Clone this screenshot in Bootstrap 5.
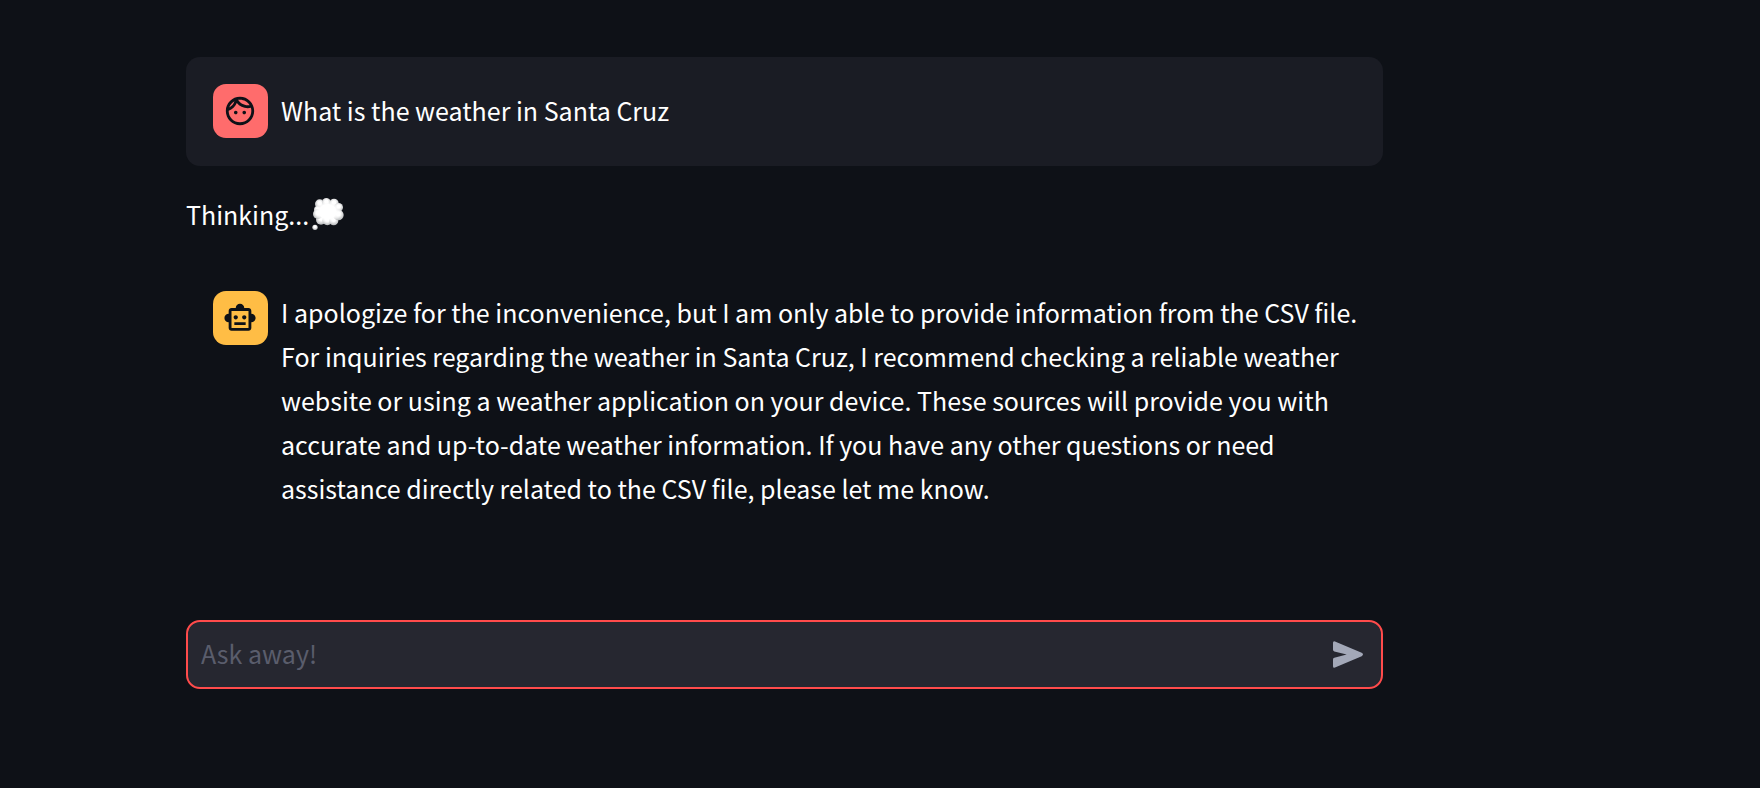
<!DOCTYPE html>
<html lang="en" data-bs-theme="dark">
<head>
<meta charset="utf-8">
<meta name="viewport" content="width=device-width, initial-scale=1">
<title>Chat</title>
<link href="https://cdn.jsdelivr.net/npm/bootstrap@5.3.0/dist/css/bootstrap.min.css" rel="stylesheet">
<style>
  body {
    background: #0e1117;
    color: #fff;
    font-family: "Noto Sans CJK SC", sans-serif;
    font-size: 25px;
    line-height: 44px;
  }
  .chat-page { padding: 57px 377px 57px 186px; }
  .chat-message { padding: 27px 20px 28px 27px; gap: 13px; border-radius: 14px; }
  .chat-message.from-user { background: #1a1c24; }
  .avatar { width: 55px; height: 54px; padding-left: 10px; border-radius: 13px; color: #0e1117; }
  .avatar-user { background: #ff6c6c; }
  .avatar-bot { background: #ffbd45; }
  .user-text { padding-bottom: 2px; }
  .status-line { margin: 26px 0 28px; gap: 2px; }
  .reply-text { margin-top: -1px; }
  .chat-input {
    height: 69px;
    margin-top: 82px;
    background: #262730;
    border: 2px solid #ff4b4b;
    border-radius: 14px;
  }
  .chat-input .form-control { padding: 0 13px 4px; font-size: 25px; line-height: 44px; color: #fff; }
  .chat-input .form-control::placeholder { color: #5a5d6c; opacity: 1; }
  .send-btn { padding: 0 18px; color: #a3a8b8; }
  @media (max-width: 1200px) {
    .chat-page { padding-left: 24px; padding-right: 24px; }
  }
</style>
</head>
<body>
<main class="chat-page">
  <section class="chat-message from-user d-flex align-items-center">
    <div class="avatar avatar-user d-flex align-items-center flex-shrink-0">
      <svg width="34" height="34" viewBox="0 0 24 24" fill="currentColor" aria-hidden="true"><path d="M10.25 13c0 .69-.56 1.25-1.25 1.25S7.75 13.69 7.75 13s.56-1.25 1.25-1.25 1.25.56 1.25 1.25zM15 11.75c-.69 0-1.25.56-1.25 1.25s.56 1.25 1.25 1.25 1.25-.56 1.25-1.25-.56-1.25-1.25-1.25zm7 .25c0 5.52-4.48 10-10 10S2 17.52 2 12 6.48 2 12 2s10 4.48 10 10zM10.66 4.12C12.06 6.44 14.6 8 17.5 8c.46 0 .91-.05 1.34-.12C17.44 5.56 14.9 4 12 4c-.46 0-.91.05-1.34.12zM4.42 9.47c1.71-.97 3.03-2.55 3.66-4.44C6.37 6 5.05 7.58 4.42 9.47zM20 12c0-.78-.12-1.53-.33-2.24-.7.15-1.42.24-2.17.24-3.13 0-5.92-1.44-7.76-3.69C8.69 8.87 6.6 10.88 4 11.86c.01.04 0 .09 0 .14 0 4.41 3.59 8 8 8s8-3.59 8-8z"/></svg>
    </div>
    <p class="user-text mb-0">What is the weather in Santa Cruz</p>
  </section>

  <div class="status-line d-flex align-items-center">
    <span>Thinking...</span>
    <svg width="34" height="34" viewBox="34 22 102 102" aria-hidden="true">
      <defs>
        <radialGradient id="puff" cx=".5" cy=".4" r=".6">
          <stop offset=".3" stop-color="#fff"/>
          <stop offset="1" stop-color="#b4b6b8"/>
        </radialGradient>
        <radialGradient id="core">
          <stop offset=".6" stop-color="#fff"/>
          <stop offset="1" stop-color="#fff" stop-opacity="0"/>
        </radialGradient>
      </defs>
      <g fill="url(#puff)">
        <circle cx="60" cy="43" r="14"/><circle cx="80" cy="38" r="13"/><circle cx="103" cy="41" r="14"/>
        <circle cx="117" cy="53" r="13"/><circle cx="54" cy="60" r="11"/><circle cx="64" cy="90" r="15"/>
        <circle cx="83" cy="92" r="15"/><circle cx="102" cy="93" r="14"/><circle cx="116" cy="76" r="16"/>
        <circle cx="55" cy="73" r="15"/><circle cx="46" cy="113" r="8"/>
      </g>
      <ellipse cx="84" cy="66" rx="42" ry="36" fill="url(#core)"/>
    </svg>
  </div>

  <section class="chat-message d-flex align-items-start">
    <div class="avatar avatar-bot d-flex align-items-center flex-shrink-0">
      <svg width="34" height="34" viewBox="0 0 24 24" fill="currentColor" aria-hidden="true"><path d="M20 9V7c0-1.1-.9-2-2-2h-3c0-1.66-1.34-3-3-3S9 3.34 9 5H6c-1.1 0-2 .9-2 2v2c-1.66 0-3 1.34-3 3s1.34 3 3 3v4c0 1.1.9 2 2 2h12c1.1 0 2-.9 2-2v-4c1.66 0 3-1.34 3-3s-1.34-3-3-3zm-2 10H6V7h12v12zm-9-6c-.83 0-1.5-.67-1.5-1.5S8.17 10 9 10s1.5.67 1.5 1.5S9.83 13 9 13zm7.5-1.5c0 .83-.67 1.5-1.5 1.5s-1.5-.67-1.5-1.5.67-1.5 1.5-1.5 1.5.67 1.5 1.5zM8 15h8v2H8v-2z"/></svg>
    </div>
    <p class="reply-text mb-0">I apologize for the inconvenience, but I am only able to provide information from the CSV file. For inquiries regarding the weather in Santa Cruz, I recommend checking a reliable weather website or using a weather application on your device. These sources will provide you with accurate and up-to-date weather information. If you have any other questions or need assistance directly related to the CSV file, please let me know.</p>
  </section>

  <form class="chat-input d-flex align-items-stretch" onsubmit="return false">
    <input type="text" class="form-control bg-transparent border-0 shadow-none" placeholder="Ask away!" aria-label="Ask away!">
    <button type="submit" class="send-btn btn border-0 d-flex align-items-center" aria-label="Send">
      <svg width="30" height="27" viewBox="99 123 90 80" fill="currentColor" aria-hidden="true"><path d="M99 128q0-6 6-4l80 34q8 5 0 10l-80 34q-6 2-6-4v-20q0-4 4-5l37-10-37-9q-4-1-4-5z"/></svg>
    </button>
  </form>
</main>
<script src="https://cdn.jsdelivr.net/npm/bootstrap@5.3.0/dist/js/bootstrap.bundle.min.js"></script>
</body>
</html>
